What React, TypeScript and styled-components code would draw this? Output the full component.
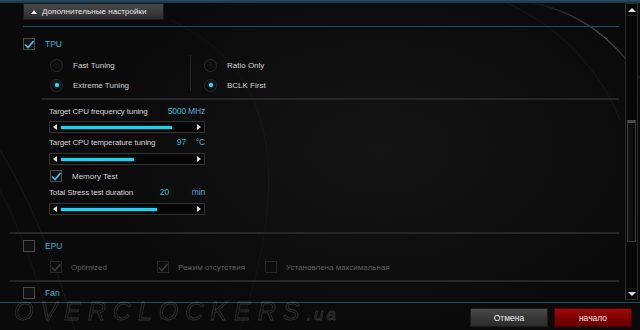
import React from 'react';
import styled, { createGlobalStyle } from 'styled-components';

const GlobalStyle = createGlobalStyle`
  html, body {
    margin: 0;
    padding: 0;
    background: #070707;
  }
  body {
    font-family: "Liberation Sans", Arial, sans-serif;
  }
  * {
    box-sizing: border-box;
  }
`;

const Window = styled.div`
  position: relative;
  width: 640px;
  height: 330px;
  overflow: hidden;
  display: flex;
  flex-direction: column;
  background:
    radial-gradient(ellipse 420px 260px at 380px 150px, rgba(34, 34, 34, 0.45), transparent 70%),
    #0a0a0a;
  color: #d4d4d4;
  font-size: 8px;
`;

const Backdrop = styled.svg`
  position: absolute;
  inset: 0;
  pointer-events: none;
`;

const TopStrip = styled.div`
  position: relative;
  flex: none;
  height: 3px;
  background: linear-gradient(#27506a, #15303f);
`;

const Main = styled.div`
  position: relative;
  flex: none;
  height: 299px;
  display: flex;
`;

const Content = styled.div`
  flex: 1;
  min-width: 0;
  padding: 0 3px 0 23px;
  display: flex;
  flex-direction: column;
  overflow: hidden;
`;

const SectionToggle = styled.button`
  align-self: flex-start;
  width: 141px;
  height: 17px;
  display: flex;
  align-items: center;
  gap: 5px;
  padding: 0 0 0 7px;
  border: 1px solid #1a1a1a;
  background: linear-gradient(#4a4a4a, #2d2d2d);
  color: #e4e4e4;
  font: 8.1px "Liberation Sans", Arial, sans-serif;
  white-space: nowrap;
  overflow: hidden;
`;

const UpTriangle = styled.span`
  flex: none;
  width: 0;
  height: 0;
  border-left: 3px solid transparent;
  border-right: 3px solid transparent;
  border-bottom: 4px solid #eeeeee;
`;

const Rule = styled.div<{ $tone: 'blue' | 'gray'; $top: number; $left?: number }>`
  flex: none;
  height: ${p => (p.$tone === 'blue' ? 1 : 2)}px;
  margin-top: ${p => p.$top}px;
  margin-left: ${p => p.$left ?? 0}px;
  background: ${p => (p.$tone === 'blue' ? '#1d4a5e' : '#262626')};
`;

const GroupHead = styled.div<{ $top: number }>`
  display: flex;
  align-items: center;
  gap: 10px;
  height: 12px;
  margin-top: ${p => p.$top}px;
`;

const GroupTitle = styled.span`
  color: #44b2dc;
  font-size: 8.5px;
`;

const Box = styled.span<{ $dim?: boolean }>`
  flex: none;
  width: 12px;
  height: 12px;
  display: flex;
  align-items: center;
  justify-content: center;
  border: 1px solid ${p => (p.$dim ? '#262626' : '#4a4a4a')};
  background: ${p => (p.$dim ? '#0c0c0c' : '#101010')};
`;

const CheckBox = ({ checked, dim }: { checked?: boolean; dim?: boolean }) => (
  <Box $dim={dim}>
    {checked && (
      <svg width="10" height="9" viewBox="0 0 10 9">
        <polyline
          points="1,4.5 4,7.5 9.5,1"
          fill="none"
          stroke={dim ? '#3c3c3c' : '#3cc6ee'}
          strokeWidth="1.6"
        />
      </svg>
    )}
  </Box>
);

const RadioArea = styled.div`
  display: flex;
  align-items: flex-start;
  margin-top: 5px;
  padding-left: 27px;
`;

const RadioColumn = styled.div<{ $width?: number }>`
  display: flex;
  flex-direction: column;
  width: ${p => (p.$width ? `${p.$width}px` : 'auto')};
`;

const ColumnDivider = styled.div`
  width: 1px;
  height: 36px;
  background: #262626;
  margin-right: 13px;
`;

const RadioRow = styled.div`
  display: flex;
  align-items: center;
  gap: 10px;
  height: 20px;
`;

const RadioDot = styled.span<{ $on?: boolean }>`
  flex: none;
  width: 13px;
  height: 13px;
  border-radius: 50%;
  display: flex;
  align-items: center;
  justify-content: center;
  border: 1px solid #2a2a2a;
  background: radial-gradient(circle at 50% 40%, #141414, #040404);

  &::after {
    content: '';
    display: ${p => (p.$on ? 'block' : 'none')};
    width: 4px;
    height: 4px;
    border-radius: 50%;
    background: #4ad0f6;
    box-shadow: 0 0 3px #1fa8e0;
  }
`;

const Label = styled.span<{ $dim?: boolean }>`
  color: ${p => (p.$dim ? '#5e5e5e' : '#d2d2d2')};
  font-size: 8px;
  white-space: nowrap;
`;

const TuningBlock = styled.div`
  display: flex;
  flex-direction: column;
  width: 156px;
  margin-left: 26px;
`;

const ValueRow = styled.div<{ $top: number }>`
  display: flex;
  align-items: center;
  height: 14px;
  margin-top: ${p => p.$top}px;
  letter-spacing: -0.15px;
`;

const ValueLabel = styled.span`
  flex: 1;
  color: #d2d2d2;
  font-size: 8px;
  white-space: nowrap;
`;

const Value = styled.span<{ $pad?: number }>`
  color: #34bccc;
  font-size: 8.5px;
  padding-right: ${p => p.$pad ?? 0}px;
`;

const Unit = styled.span`
  width: 19px;
  text-align: right;
  color: #5ba9d9;
  font-size: 8.5px;
`;

const SliderFrame = styled.div<{ $top: number }>`
  display: flex;
  align-items: center;
  height: 12px;
  margin-top: ${p => p.$top}px;
  padding: 0 3px;
  border: 1px solid #333333;
  background: #050505;
`;

const ArrowLeft = styled.span`
  flex: none;
  width: 0;
  height: 0;
  border-top: 3px solid transparent;
  border-bottom: 3px solid transparent;
  border-right: 4px solid #dcdcdc;
`;

const ArrowRight = styled.span`
  flex: none;
  width: 0;
  height: 0;
  border-top: 3px solid transparent;
  border-bottom: 3px solid transparent;
  border-left: 4px solid #dcdcdc;
`;

const Track = styled.div`
  flex: 1;
  height: 3px;
  margin: 0 4px;
`;

const Fill = styled.div`
  height: 100%;
  background: #1fd0f2;
  box-shadow: 0 0 2px rgba(31, 208, 242, 0.6);
`;

const Slider = ({ level, top }: { level: number; top: number }) => (
  <SliderFrame $top={top}>
    <ArrowLeft />
    <Track>
      <Fill style={{ width: `${level * 100}%` }} />
    </Track>
    <ArrowRight />
  </SliderFrame>
);

const MemoryRow = styled.div`
  display: flex;
  align-items: center;
  gap: 10px;
  height: 12px;
  margin: 5px 0 0 1px;
`;

const OptionRow = styled.div`
  display: grid;
  grid-template-columns: 107px 108px auto;
  height: 12px;
  margin-top: 9px;
  padding-left: 27px;
`;

const Option = styled.div`
  display: flex;
  align-items: center;
  gap: 9px;
`;

const ScrollBar = styled.div`
  flex: none;
  width: 13px;
  margin: 0 2px 2px 3px;
  display: flex;
  flex-direction: column;
  border: 1px solid #2a2a2a;
  background: #070707;
`;

const ScrollArrow = styled.div<{ $down?: boolean }>`
  flex: none;
  height: 11px;
  display: flex;
  align-items: center;
  justify-content: center;

  &::before {
    content: '';
    border-left: 4px solid transparent;
    border-right: 4px solid transparent;
    ${p =>
      p.$down ? 'border-top: 4px solid #e0e0e0;' : 'border-bottom: 4px solid #e0e0e0;'}
  }
`;

const ScrollTrack = styled.div`
  flex: 1;
  display: flex;
  flex-direction: column;
  padding: 0 1px;
  border-top: 1px solid #1e1e1e;
`;

const Thumb = styled.div`
  border: 1px solid #3a3a3a;
  border-top: 3px solid #4a4a4a;
  background: linear-gradient(90deg, #141414, #0b0b0b);
`;

const Footer = styled.div`
  position: relative;
  flex: 1;
  display: flex;
  justify-content: flex-end;
  gap: 6px;
  padding: 5px 8px 0 0;
  border-top: 1px solid #1f4f63;
`;

const ActionButton = styled.button<{ $primary?: boolean }>`
  width: 78px;
  height: 19px;
  padding: 0;
  border: 1px solid ${p => (p.$primary ? '#4e0000' : '#1c1c1c')};
  background: ${p =>
    p.$primary
      ? 'linear-gradient(#a00a0a, #7a0202 55%, #6a0000)'
      : 'linear-gradient(#4a4a4a, #363636 55%, #2c2c2c)'};
  color: #ececec;
  font: 8.5px "Liberation Sans", Arial, sans-serif;
`;

const Watermark = styled.div`
  position: absolute;
  left: 14px;
  top: 297px;
  font: italic 25px "Liberation Sans", Arial, sans-serif;
  letter-spacing: 7px;
  color: transparent;
  -webkit-text-stroke: 0.8px rgba(150, 150, 150, 0.3);
  pointer-events: none;
  white-space: nowrap;

  small {
    font-size: 17px;
    letter-spacing: 3px;
  }
`;

const App: React.FC = () => {
  return (
    <>
      <GlobalStyle />
      <Window>
        <Backdrop width="640" height="330" viewBox="0 0 640 330">
          <defs>
            <linearGradient id="streak" x1="0" y1="0" x2="1" y2="1">
              <stop offset="0" stopColor="#ffffff" stopOpacity="0" />
              <stop offset="0.6" stopColor="#ffffff" stopOpacity="0.28" />
              <stop offset="1" stopColor="#ffffff" stopOpacity="0.05" />
            </linearGradient>
          </defs>
          <path d="M520 0 C 580 10, 615 40, 640 78" stroke="url(#streak)" strokeWidth="1.4" fill="none" />
          <path d="M500 0 C 560 25, 600 70, 620 120" stroke="#ffffff" strokeOpacity="0.05" strokeWidth="1" fill="none" />
          <path d="M170 20 C 260 60, 300 150, 240 330" stroke="#ffffff" strokeOpacity="0.03" strokeWidth="1" fill="none" />
          <path d="M0 150 C 30 200, 55 260, 75 330" stroke="#ffffff" strokeOpacity="0.06" strokeWidth="1" fill="none" />
          <path d="M0 190 C 20 230, 40 280, 50 330" stroke="#ffffff" strokeOpacity="0.04" strokeWidth="1" fill="none" />
        </Backdrop>

        <TopStrip />

        <Main>
          <Content>
            <SectionToggle>
              <UpTriangle />
              Дополнительные настройки
            </SectionToggle>
            <Rule $tone="blue" $top={6} />

            <GroupHead $top={11}>
              <CheckBox checked />
              <GroupTitle>TPU</GroupTitle>
            </GroupHead>

            <RadioArea>
              <RadioColumn $width={140}>
                <RadioRow>
                  <RadioDot />
                  <Label>Fast Tuning</Label>
                </RadioRow>
                <RadioRow>
                  <RadioDot $on />
                  <Label>Extreme Tuning</Label>
                </RadioRow>
              </RadioColumn>
              <ColumnDivider />
              <RadioColumn>
                <RadioRow>
                  <RadioDot />
                  <Label>Ratio Only</Label>
                </RadioRow>
                <RadioRow>
                  <RadioDot $on />
                  <Label>BCLK First</Label>
                </RadioRow>
              </RadioColumn>
            </RadioArea>

            <Rule $tone="gray" $top={3} $left={19} />

            <TuningBlock>
              <ValueRow $top={4}>
                <ValueLabel>Target CPU frequency tuning</ValueLabel>
                <Value>5000</Value>
                <Unit>MHz</Unit>
              </ValueRow>
              <Slider level={0.84} top={3} />

              <ValueRow $top={2}>
                <ValueLabel>Target CPU temperature tuning</ValueLabel>
                <Value>97</Value>
                <Unit>°C</Unit>
              </ValueRow>
              <Slider level={0.55} top={4} />

              <MemoryRow>
                <CheckBox checked />
                <Label>Memory Test</Label>
              </MemoryRow>

              <ValueRow $top={3}>
                <ValueLabel>Total Stress test duration</ValueLabel>
                <Value $pad={17}>20</Value>
                <Unit>min</Unit>
              </ValueRow>
              <Slider level={0.73} top={4} />
            </TuningBlock>

            <Rule $tone="gray" $top={17} $left={-13} />

            <GroupHead $top={6}>
              <CheckBox />
              <GroupTitle>EPU</GroupTitle>
            </GroupHead>

            <OptionRow>
              <Option>
                <CheckBox checked dim />
                <Label $dim>Optimized</Label>
              </Option>
              <Option>
                <CheckBox checked dim />
                <Label $dim>Режим отсутствия</Label>
              </Option>
              <Option>
                <CheckBox dim />
                <Label $dim>Установлена максимальная</Label>
              </Option>
            </OptionRow>

            <Rule $tone="gray" $top={7} $left={-13} />

            <GroupHead $top={5}>
              <CheckBox />
              <GroupTitle>Fan</GroupTitle>
            </GroupHead>
          </Content>

          <ScrollBar>
            <ScrollArrow />
            <ScrollTrack>
              <div style={{ height: 104 }} />
              <Thumb style={{ height: 122 }} />
            </ScrollTrack>
            <ScrollArrow $down />
          </ScrollBar>
        </Main>

        <Footer>
          <ActionButton>Отмена</ActionButton>
          <ActionButton $primary>начало</ActionButton>
        </Footer>

        <Watermark>
          OVERCLOCKERS<small>.ua</small>
        </Watermark>
      </Window>
    </>
  );
};

export default App;
